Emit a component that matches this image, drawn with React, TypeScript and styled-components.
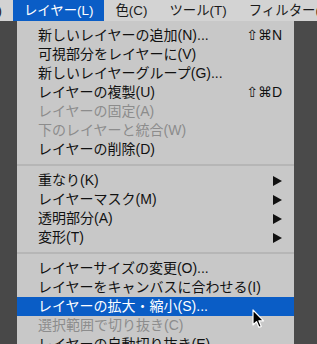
import styled, { createGlobalStyle } from "styled-components";

const GlobalStyle = createGlobalStyle`
  html, body {
    margin: 0;
    padding: 0;
    background: #4a4a4a;
  }
  body {
    font-family: "Liberation Sans", "Noto Sans CJK JP", sans-serif;
  }
`;

type Item = {
  label: string;
  shortcut?: string;
  disabled?: boolean;
  submenu?: boolean;
  active?: boolean;
};

const groups: Item[][] = [
  [
    { label: "新しいレイヤーの追加(N)...", shortcut: "⇧⌘N" },
    { label: "可視部分をレイヤーに(V)" },
    { label: "新しいレイヤーグループ(G)..." },
    { label: "レイヤーの複製(U)", shortcut: "⇧⌘D" },
    { label: "レイヤーの固定(A)", disabled: true },
    { label: "下のレイヤーと統合(W)", disabled: true },
    { label: "レイヤーの削除(D)" },
  ],
  [
    { label: "重なり(K)", submenu: true },
    { label: "レイヤーマスク(M)", submenu: true },
    { label: "透明部分(A)", submenu: true },
    { label: "変形(T)", submenu: true },
  ],
  [
    { label: "レイヤーサイズの変更(O)..." },
    { label: "レイヤーをキャンバスに合わせる(I)" },
    { label: "レイヤーの拡大・縮小(S)...", active: true },
    { label: "選択範囲で切り抜き(C)", disabled: true },
    { label: "レイヤーの自動切り抜き(E)" },
  ],
];

const menus = [
  { label: "イメージ(I)" },
  { label: "レイヤー(L)", open: true },
  { label: "色(C)" },
  { label: "ツール(T)" },
  { label: "フィルター(R)" },
];

function Cursor() {
  return (
    <CursorBox width="13" height="20" viewBox="0 0 13 20">
      <path
        d="M1 1 L1 16 L4.5 12.6 L7 18.4 L9.3 17.4 L6.9 11.8 L11.6 11.8 Z"
        fill="#000"
        stroke="#fff"
        strokeWidth="1.2"
        strokeLinejoin="round"
      />
    </CursorBox>
  );
}

function SubArrow() {
  return (
    <svg width="9" height="10" viewBox="0 0 9 10">
      <path d="M0 0 L9 5 L0 10 Z" fill="#111" />
    </svg>
  );
}

export default function App() {
  return (
    <Screen>
      <GlobalStyle />
      <MenuBar>
        {menus.map((m) => (
          <BarItem key={m.label} $open={!!m.open}>
            {m.label}
          </BarItem>
        ))}
      </MenuBar>
      <Body>
        <Side />
        <Dropdown>
          {groups.map((group, gi) => (
            <Group key={gi}>
              {gi > 0 && <Separator />}
              {group.map((item) => (
                <Row
                  key={item.label}
                  $active={!!item.active}
                  $disabled={!!item.disabled}
                >
                  <Label>{item.label}</Label>
                  {item.shortcut && <Shortcut>{item.shortcut}</Shortcut>}
                  {item.submenu && <SubArrow />}
                  {item.active && <Cursor />}
                </Row>
              ))}
            </Group>
          ))}
        </Dropdown>
      </Body>
    </Screen>
  );
}

const Screen = styled.div`
  width: 317px;
  height: 344px;
  overflow: hidden;
  background: #4a4a4a;
  display: flex;
  flex-direction: column;
`;

const MenuBar = styled.div`
  display: flex;
  height: 21px;
  margin-left: -75px;
  background: #d3d3d3;
  white-space: nowrap;
  flex-shrink: 0;
`;

const BarItem = styled.div<{ $open: boolean }>`
  display: flex;
  align-items: center;
  padding: 0 11px;
  font-size: 13.4px;
  line-height: 21px;
  color: ${(p) => (p.$open ? "#fff" : "#1a1a1a")};
  background: ${(p) => (p.$open ? "#0a5dc6" : "transparent")};
`;

const Body = styled.div`
  display: flex;
  flex: 1;
  min-height: 0;
`;

const Side = styled.div`
  width: 17px;
  flex-shrink: 0;
  background: #484848;
`;

const Dropdown = styled.div`
  width: 277px;
  flex-shrink: 0;
  padding-top: 5px;
  background: #c8c8c8;
`;

const Group = styled.div`
  display: flex;
  flex-direction: column;
`;

const Separator = styled.div`
  height: 2px;
  margin: 5px 0;
  background: #b6b6b6;
`;

const Row = styled.div<{ $active: boolean; $disabled: boolean }>`
  position: relative;
  display: flex;
  align-items: center;
  height: 19px;
  padding: 0 12px 0 21px;
  font-size: 14px;
  white-space: nowrap;
  color: ${(p) => (p.$active ? "#fff" : p.$disabled ? "#8c8c8c" : "#111")};
  background: ${(p) => (p.$active ? "#0a5dc6" : "transparent")};
`;

const Label = styled.span`
  flex: 1;
  line-height: 19px;
`;

const Shortcut = styled.span`
  font-family: "Liberation Sans", "DejaVu Sans", sans-serif;
  font-size: 14px;
  line-height: 19px;
`;

const CursorBox = styled.svg`
  position: absolute;
  left: 235px;
  top: 12px;
`;
